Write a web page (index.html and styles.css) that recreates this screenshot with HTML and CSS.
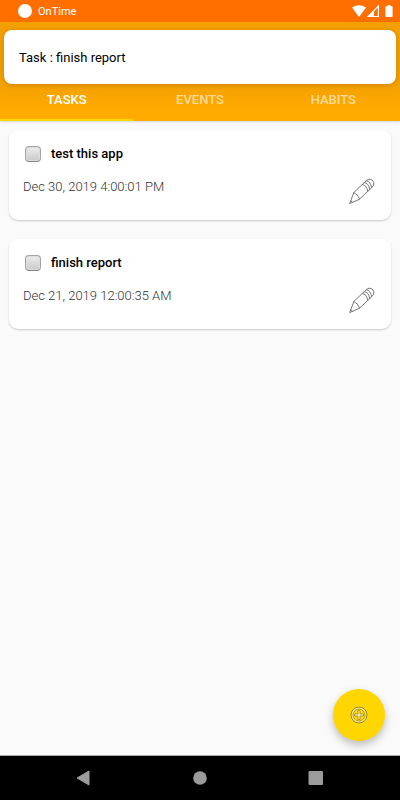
FILE: index.html
```html
<!DOCTYPE html>
<html lang="en">
<head>
<meta charset="utf-8">
<meta name="viewport" content="width=device-width, initial-scale=1">
<title>OnTime</title>
<link rel="stylesheet" href="styles.css">
</head>
<body>
<div class="status-bar">
  <span class="status-dot"></span>
  <span class="status-app">OnTime</span>
  <svg class="status-icons" width="42" height="14" viewBox="0 0 42 14" aria-hidden="true">
    <path d="M0 3.5Q7 -1 14 3.5L7 13Z" fill="#fff"/>
    <path d="M26.4 2V12.5H16.2Z" fill="none" stroke="#fff" stroke-width="1.2"/>
    <path d="M22 6.500V12.500H16.2Z" fill="#fff"/>
    <path d="M35.5 1h3v1.2h1.2q.9 0 .9.9v9q0 .9-.9.9h-5.400q-.9 0-.9-.9v-9q0-.9.9-.9h1.200z" fill="#fff"/>
  </svg>
</div>
<header class="app-header">
  <div class="toast" role="status">Task : finish report</div>
  <nav class="tabs">
    <a class="tab tab-active" href="#tasks">TASKS</a>
    <a class="tab" href="#events">EVENTS</a>
    <a class="tab" href="#habits">HABITS</a>
  </nav>
</header>
<main class="tasks" id="tasks">
  <article class="card">
    <div class="card-title">
      <input class="check" type="checkbox" id="task-1">
      <label for="task-1">test this app</label>
    </div>
    <div class="card-detail">
      <time datetime="2019-12-30T16:00:01">Dec 30, 2019 4:00:01 PM</time>
      <button class="edit" type="button" aria-label="Edit test this app">
        <svg width="26" height="26" viewBox="0 0 26 26" aria-hidden="true"><use href="#pencil"/></svg>
      </button>
    </div>
  </article>
  <article class="card">
    <div class="card-title">
      <input class="check" type="checkbox" id="task-2">
      <label for="task-2">finish report</label>
    </div>
    <div class="card-detail">
      <time datetime="2019-12-21T00:00:35">Dec 21, 2019 12:00:35 AM</time>
      <button class="edit" type="button" aria-label="Edit finish report">
        <svg width="26" height="26" viewBox="0 0 26 26" aria-hidden="true"><use href="#pencil"/></svg>
      </button>
    </div>
  </article>
</main>
<button class="fab" type="button" aria-label="Add task">
  <svg width="18" height="18" viewBox="0 0 18 18" fill="none" aria-hidden="true">
    <circle cx="9" cy="9" r="6.900" stroke="#f5eaa8" stroke-width="1.500"/>
    <circle cx="9" cy="9" r="8" stroke="#85731f" stroke-width=".8"/>
    <circle cx="9" cy="9" r="6" stroke="#85731f" stroke-width=".6"/>
    <path d="M8 4.500h2V8h3.500v2H10v3.500H8V10H4.500V8H8z" fill="#f5eaa8" stroke="#85731f" stroke-width=".6"/>
  </svg>
</button>
<nav class="system-nav" aria-label="System">
  <button type="button" aria-label="Back"><svg width="16" height="16" viewBox="0 0 16 16"><path d="M13 1V15L1 8Z" fill="#9b9b9b" stroke="#9b9b9b" stroke-linejoin="round"/></svg></button>
  <button type="button" aria-label="Home"><svg width="16" height="16" viewBox="0 0 16 16"><circle cx="8" cy="8" r="6.800" fill="#9b9b9b"/></svg></button>
  <button type="button" aria-label="Recent apps"><svg width="16" height="16" viewBox="0 0 16 16"><rect x=".5" y="1" width="14.500" height="14" rx="1" fill="#9b9b9b"/></svg></button>
</nav>
<svg class="symbols" aria-hidden="true">
  <symbol id="pencil" viewBox="0 0 26 26">
    <g fill="none" stroke="#777" stroke-width="1" stroke-linejoin="round" stroke-linecap="round">
      <path d="M.8 25.200 4.800 14.600 17.500 2.400Q20 .2 22.800 1.700 26 4 24.500 7.600L22.600 9.800 10.400 21.200Z"/>
      <path d="M4.800 14.600Q6.200 15 6.800 16.200 9 16.400 9.200 18.800 10.400 19.600 10.400 21.200"/>
      <path d="M13.300 6.500Q18 7 18.700 13.400M15.300 4.600Q20 5 20.700 11.500M17.300 2.700Q22 3.400 22.600 9.800"/>
      <path d="M1.800 22.600 3.300 24.200"/>
    </g>
  </symbol>
</svg>
</body>
</html>
```
FILE: styles.css
```css
* {
  box-sizing: border-box;
}

body {
  margin: 0;
  min-height: 100vh;
  display: flex;
  flex-direction: column;
  background: #fafafa;
  color: #000;
  font-family: Roboto, sans-serif;
  font-size: 13px;
  line-height: 16px;
}

button {
  display: flex;
  align-items: center;
  justify-content: center;
  padding: 0;
  border: 0;
  background: none;
}

.symbols {
  position: absolute;
  width: 0;
  height: 0;
}

.status-bar {
  display: flex;
  align-items: center;
  gap: 6px;
  height: 22px;
  padding: 0 6px 0 18px;
  background: #ff6f00;
  color: #fff;
  font-size: 11px;
  line-height: 17px;
}

.status-dot {
  width: 14px;
  height: 14px;
  border-radius: 50%;
  background: #fff;
}

.status-icons {
  margin-left: auto;
}

.app-header {
  position: relative;
  padding-top: 55px;
  background: linear-gradient(#f2a000, #f2a000 60%, #ffab00 90%);
  box-shadow: 0 1px 2px rgba(0, 0, 0, 0.15);
}

.toast {
  position: absolute;
  top: 8px;
  left: 4px;
  right: 4px;
  padding: 20px 15px 18px;
  border-radius: 8px;
  background: #fff;
  box-shadow: 0 1px 5px rgba(120, 60, 0, 0.3);
}

.tabs {
  display: flex;
}

.tab {
  flex: 1;
  padding: 15px 0 11px;
  border-bottom: 2px solid transparent;
  color: rgba(255, 255, 255, 0.6);
  font-weight: 500;
  text-align: center;
  text-decoration: none;
}

.tab-active {
  border-color: #ffd600;
  color: #fff;
}

.tasks {
  flex: 1;
  display: flex;
  flex-direction: column;
  gap: 19px;
  padding: 9px;
}

.card {
  padding: 16px 14px;
  border-radius: 9px;
  background: #fff;
  box-shadow: 0 1px 2px rgba(0, 0, 0, 0.2);
}

.card-title {
  display: flex;
  align-items: center;
  gap: 10px;
  padding-left: 2px;
  font-weight: 500;
}

.check {
  appearance: none;
  width: 16px;
  height: 16px;
  margin: 0;
  border: 1px solid #a4a4a4;
  border-bottom-color: #858585;
  border-radius: 4px;
  background: linear-gradient(#ededed, #c9c9c9);
  box-shadow: inset 0 0 1px 1px #ddd;
}

.card-detail {
  display: flex;
  align-items: flex-start;
  justify-content: space-between;
  padding-top: 16px;
  color: #333;
  font-weight: 300;
  line-height: 18px;
}

.edit {
  margin-right: 2px;
}

.fab {
  position: fixed;
  right: 15px;
  bottom: 59px;
  width: 52px;
  height: 52px;
  border-radius: 50%;
  background: #ffd600;
  box-shadow: 0 4px 8px rgba(0, 0, 0, 0.25);
}

.system-nav {
  display: flex;
  justify-content: center;
  gap: 100px;
  padding: 14px 0;
  border-top: 1px solid #aaa;
  background: #000;
}
```
